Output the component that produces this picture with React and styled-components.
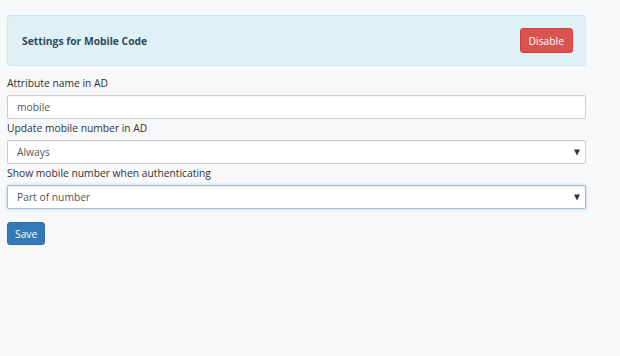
import styled, { createGlobalStyle } from 'styled-components';

const GlobalStyle = createGlobalStyle`
  html, body {
    margin: 0;
    padding: 0;
    background: #f7f8fa;
    font-family: 'Open Sans', 'Noto Sans', sans-serif;
    font-size: 10.3px;
    color: #333333;
  }
`;

const Page = styled.div`
  width: 579px;
  padding: 15px 0 0 7px;
  display: flex;
  flex-direction: column;
`;

const Panel = styled.div`
  height: 49px;
  background: #dff0f7;
  border: 1px solid #cfe6ef;
  border-radius: 3px;
  display: flex;
  align-items: center;
  justify-content: space-between;
  padding: 0 12px 0 14px;
`;

const PanelTitle = styled.h3`
  margin: 0;
  font-size: 10.3px;
  font-weight: 700;
  color: #2f4b5b;
`;

const Button = styled.button`
  font-family: inherit;
  font-size: 10.3px;
  color: #ffffff;
  background: ${(p) => (p.$danger ? '#d9534f' : '#337ab7')};
  border: 1px solid ${(p) => (p.$danger ? '#d43f3a' : '#2e6da4')};
  border-radius: 3px;
  height: ${(p) => (p.$danger ? '25px' : '23px')};
  padding: 0 ${(p) => (p.$danger ? '8px' : '7px')};
  cursor: pointer;
`;

const Field = styled.div`
  display: flex;
  flex-direction: column;
`;

const Label = styled.label`
  height: 14px;
  line-height: 14px;
  margin: ${(p) => (p.$first ? '10px' : '2px')} 0 5px;
`;

const Box = styled.div`
  position: relative;
  box-sizing: border-box;
  height: 24px;
  background: #ffffff;
  border: 1px solid ${(p) => (p.$focused ? '#9fbfd3' : '#cccccc')};
  border-radius: 2px;
  box-shadow: ${(p) =>
    p.$focused
      ? 'inset 0 1px 1px rgba(0,0,0,0.06), 0 0 3px rgba(102,160,210,0.5)'
      : 'inset 0 1px 1px rgba(0,0,0,0.04)'};
  display: flex;
  align-items: center;
  padding: 0 9px;
  color: #555555;
`;

const Caret = styled.span`
  position: absolute;
  right: 5px;
  top: 50%;
  transform: translateY(-40%);
  width: 0;
  height: 0;
  border-left: 3.5px solid transparent;
  border-right: 3.5px solid transparent;
  border-top: 6px solid #333333;
`;

const Actions = styled.div`
  margin-top: 13px;
`;

export default function App() {
  return (
    <>
      <GlobalStyle />
      <Page>
        <Panel>
          <PanelTitle>Settings for Mobile Code</PanelTitle>
          <Button $danger>Disable</Button>
        </Panel>
        <Field>
          <Label $first>Attribute name in AD</Label>
          <Box>mobile</Box>
        </Field>
        <Field>
          <Label>Update mobile number in AD</Label>
          <Box>
            Always
            <Caret />
          </Box>
        </Field>
        <Field>
          <Label>Show mobile number when authenticating</Label>
          <Box $focused>
            Part of number
            <Caret />
          </Box>
        </Field>
        <Actions>
          <Button>Save</Button>
        </Actions>
      </Page>
    </>
  );
}
